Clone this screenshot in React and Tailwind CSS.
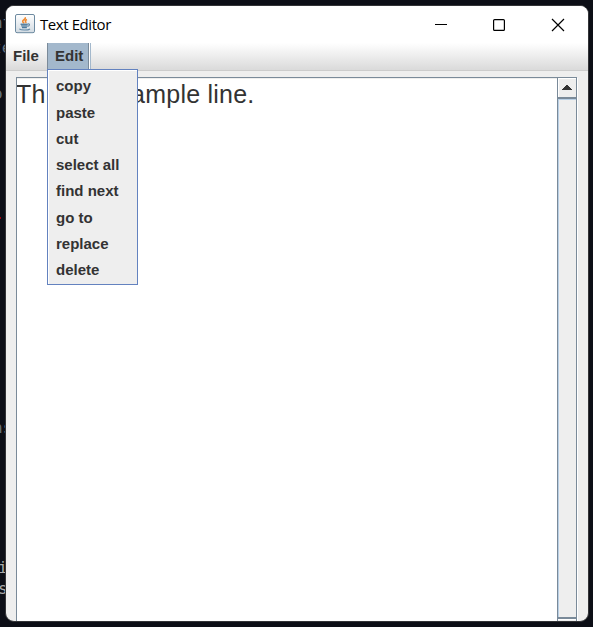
const items = ["copy", "paste", "cut", "select all", "find next", "go to", "replace", "delete"];

function JavaIcon() {
  return (
    <svg width="20" height="20" viewBox="0 0 20 20" fill="none" className="mb-[2px] shrink-0">
      <defs>
        <linearGradient id="tile" x1="0" y1="0" x2="0" y2="1">
          <stop offset="0" stopColor="#ffffff" />
          <stop offset="1" stopColor="#d2dbe2" />
        </linearGradient>
      </defs>
      <rect x="0.5" y="0.5" width="19" height="18.2" rx="1.5" fill="url(#tile)" stroke="#6d8aa0" />
      <path d="M10.3 3.2c.8 2.2-3 2.4-2.6 4.3.2.8 1 1.1 1.4 1.8M12 5.4c-1.8.8-2.2 1.4-1.3 2.3.4.5.2.9-.2 1.3" stroke="#f08a30" strokeWidth="1.6" />
      <path d="M5.8 9.8h6.8c.2 1.8-.4 3.6-1.4 4H7.6c-1.2-.4-1.7-2.2-1.8-4z" fill="#7c9db5" />
      <path d="M5.5 10.3h7.2M7 13.6h4.8" stroke="#4c7a9d" strokeWidth="1.1" />
      <path d="M12.8 9.9c2.3-.3 2.2 2-.4 2.5M4.3 14.9c1.8 1.5 8.7 1.4 10.7 0" stroke="#648aa8" strokeWidth="1.2" />
    </svg>
  );
}

function TitleBar() {
  return (
    <div className="flex h-[37px] shrink-0 items-center bg-white pl-[9px] font-normal">
      <JavaIcon />
      <span className="mb-[2px] ml-[5px] w-[380px] whitespace-nowrap font-['Open_Sans',sans-serif] text-[15px] leading-5 tracking-[-0.43px] text-black">Text Editor</span>
      <svg width="148" height="36" viewBox="0 0 148 36" fill="none" stroke="#000" className="shrink-0">
        <path d="M15 17.5h12" shapeRendering="crispEdges" />
        <rect x="73.6" y="12.6" width="10.8" height="10.8" rx="1" strokeWidth="1.2" />
        <path d="M132 12l12 12M144 12l-12 12" strokeWidth="1.2" />
      </svg>
    </div>
  );
}

function EditMenu() {
  return (
    <div className="h-[216px] w-[91px] border border-[#6382bf] bg-[#eee] pl-[7px] pt-[3.25px] shadow-[inset_1px_1px_0_#fff]">
      {items.map((item) => (
        <div key={item} className="h-[26.25px] whitespace-nowrap pl-px leading-[26px]">{item}</div>
      ))}
    </div>
  );
}

function Editor() {
  return (
    <div className="ml-[10px] mr-[11px] mt-[6px] flex min-h-0 flex-1 border-l border-t border-[#7a8a99]">
      <div className="flex-1 overflow-hidden bg-white font-['Liberation_Sans',Arial,sans-serif] text-[25px] font-normal leading-[29px] tracking-[0.23px] text-[#333] shadow-[inset_0_1px_0_#eee]">
        <div className="-ml-px whitespace-nowrap pt-[2px]">This is a sample line.</div>
      </div>
      <div className="flex w-[20px] shrink-0 flex-col border-x border-[#7a8a99] bg-[#eee] shadow-[1px_0_0_#fff]">
        <div className="flex h-[19px] shrink-0 border-l border-t border-white pl-[3px] pt-[6px]">
          <svg width="10" height="6" viewBox="0 0 10 6" shapeRendering="crispEdges">
            <path d="M4 0h2v1h1v1h1v1h1v1h1v1H0V4h1V3h1V2h1V1h1z" fill="#333" />
          </svg>
        </div>
        <div className="h-[2px] shrink-0 bg-[#7a8a99]" />
        <div className="flex-1 border-l border-t border-[#b8cfe5]" />
        <div className="h-[2px] shrink-0 bg-[#7a8a99]" />
        <div className="h-[2px] shrink-0 border-t border-white" />
      </div>
    </div>
  );
}

export default function App() {
  return (
    <div className="relative h-[627px] w-[593px] overflow-hidden bg-[#0c0e16]">
      <div className="absolute inset-0 font-['DejaVu_Sans_Mono',monospace] text-[16px] leading-5 text-[#66727f]">
        <span className="absolute left-[-7px] top-[13px]">nt</span>
        <span className="absolute left-[-8px] top-[38px]">te</span>
        <span className="absolute left-[-7px] top-[84px]">or</span>
        <span className="absolute left-0 top-[217px] h-[2px] w-px bg-[#a00010]" />
        <span className="absolute left-[-7px] top-[418px]">ns</span>
        <span className="absolute left-[-2px] top-[558px] text-[#aaa]">i</span>
        <span className="absolute left-[-2px] top-[579px] text-[#aaa]">s</span>
      </div>
      <div className="absolute left-[5px] top-[5px] flex h-[617px] w-[584px] flex-col overflow-hidden rounded-[9px] border border-[#333437] bg-[#eee] font-['Liberation_Sans',Arial,sans-serif] text-[15px] font-bold text-[#333]">
        <TitleBar />
        <div className="flex h-[28px] shrink-0 border-b border-[#ccc] bg-linear-to-b from-white to-[#dadada] pl-[7px] leading-[26px]">
          <div className="w-[34px]">File</div>
          <div className="relative h-[26px] w-[42px] border-l border-[#7a8a99] bg-[#a3b8cc] pl-[7px] leading-[26px] shadow-[inset_-1px_0_0_#7a8a99,1px_0_0_#fff,2px_0_0_#a3b8cc]">
            Edit
            <div className="absolute -left-px top-[26px] z-10"><EditMenu /></div>
          </div>
        </div>
        <Editor />
      </div>
    </div>
  );
}
